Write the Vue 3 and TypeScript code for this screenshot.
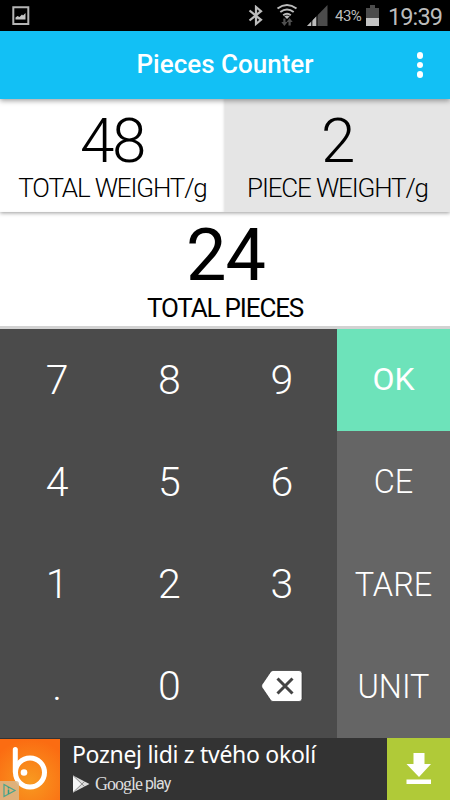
<script setup lang="ts">
import { ref, computed } from 'vue'

const title = 'Pieces Counter'
const totalWeight = ref(48)
const pieceWeight = ref(2)
const pieces = computed(() => Math.floor(totalWeight.value / pieceWeight.value))
const digits = ['7', '8', '9', '4', '5', '6', '1', '2', '3', '.', '0']
const actions = ['OK', 'CE', 'TARE', 'UNIT']
</script>

<template>
  <div class="screen">
    <header class="status">
      <svg class="shot" width="18" height="20" viewBox="0 0 18 20">
        <path d="M1.3 1.3h15v16.8h-15z" fill="none" stroke="#b5b5b5" stroke-width="2" />
        <path d="M3.5 13.5v-2l2-1.5 2 1 2.500-2.500 1 1 2.500-2.500v6.500z" fill="#c5c5c5" />
      </svg>
      <svg class="bt" width="16" height="22" viewBox="0 0 16 22">
        <path d="M1.500 5.500 13 14.800 8 19V2l5 4.200L1.500 15.500" fill="none" stroke="#bcbcbc" stroke-width="2.200" />
      </svg>
      <svg class="wifi" width="22" height="24" viewBox="0 0 22 24">
        <g fill="none" stroke="#bcbcbc" stroke-width="2">
          <path d="M1.500 5.500q9.500-7 19 0M4.300 9q6.700-5 13.400 0M7.200 12.300q3.800-3 7.600 0" />
        </g>
        <path d="M8.300 13.300q2.700-1.800 5.400 0L11 16z" fill="#bcbcbc" />
        <path d="M7.300 15.500h2.200V19h2L8.400 23 5.300 19h2zM12.500 22.500V19h-2l3.100-4 3.100 4h-2v3.500z" fill="#505050" />
      </svg>
      <svg class="signal" width="21" height="21" viewBox="0 0 21 21">
        <path d="M20.500 0v21H0z" fill="#4b4b4b" />
        <path d="M9.500 11.300V21H0z" fill="#bcbcbc" />
        <path d="M4.800 13v8M10 8v13" stroke="#000" stroke-width="1" />
      </svg>
      <span class="percent">43%</span>
      <svg class="battery" width="13" height="21" viewBox="0 0 13 21">
        <path d="M4 0h5v3h4v18H0V3h4z" fill="#4c4c4c" />
        <path d="M0 13h13v8H0z" fill="#c4c4c4" />
      </svg>
      <time class="clock">19:39</time>
    </header>

    <div class="appbar">
      <h1>{{ title }}</h1>
      <button class="more" aria-label="Menu"><i /><i /><i /></button>
    </div>

    <section class="weights">
      <div class="weight active">
        <div class="value">{{ totalWeight }}</div>
        <div class="label">TOTAL WEIGHT/g</div>
      </div>
      <div class="weight">
        <div class="value">{{ pieceWeight }}</div>
        <div class="label">PIECE WEIGHT/g</div>
      </div>
    </section>

    <section class="total">
      <div class="total-value">{{ pieces }}</div>
      <div class="total-label">TOTAL PIECES</div>
    </section>

    <main class="keypad">
      <div class="digits">
        <button v-for="d in digits" :key="d">{{ d }}</button>
        <button aria-label="Backspace">
          <svg class="erase" width="42" height="32" viewBox="0 0 42 32">
            <path d="M12 .5h26q3 0 3 3v25q0 3-3 3H12q-1.500 0-2.500-1.500L1 17.500q-.8-1.500 0-3L9.500 2Q10.500.5 12 .5z" fill="#fff" stroke="#333" stroke-width=".7" />
            <path d="m16.500 8.500 15 15M31.500 8.500l-15 15" stroke="#444" stroke-width="3" />
          </svg>
        </button>
      </div>
      <div class="actions">
        <button v-for="a in actions" :key="a" :class="a.toLowerCase()">{{ a }}</button>
      </div>
    </main>

    <footer class="ad">
      <svg class="brand" width="60" height="62" viewBox="0 0 60 62">
        <defs>
          <radialGradient id="glow" cx=".5" cy=".7" r=".7">
            <stop offset="0" stop-color="#f89a20" />
            <stop offset="1" stop-color="#fb6c12" />
          </radialGradient>
        </defs>
        <path d="M0 1h60v61H0z" fill="url(#glow)" />
        <path d="M15.300 11.500V34" stroke="#fff" stroke-width="5" stroke-linecap="round" />
        <circle cx="30" cy="34.500" r="14.500" fill="none" stroke="#fff" stroke-width="5" />
        <circle cx="24" cy="34.500" r="3.300" fill="#fff" />
        <path d="M0 43h16q3 0 3 3v16H0z" fill="#d9b98c" opacity=".85" />
        <path d="M4 46.500v12l11-6z" fill="none" stroke="#4aa58d" stroke-width="1.200" />
        <path d="M8.500 49v1.500M8.500 51.500V56" stroke="#379c82" stroke-width="1.500" />
      </svg>
      <div class="copy">
        <div class="headline">Poznej lidi z tvého okolí</div>
        <div class="store">
          <svg width="18" height="18" viewBox="0 0 18 18">
            <path d="M1 .5 17.500 9 1 17.500z" fill="#ddd" />
            <path d="M1 .5 9.500 9 1 17.500z" fill="#f7f7f7" />
            <path d="m1 .5 12 11.500M1 17.500 13 6" fill="none" stroke="#777" stroke-width=".8" />
          </svg>
          <span class="google">Google</span><span class="play">play</span>
        </div>
      </div>
      <button class="download" aria-label="Download">
        <svg width="26" height="32" viewBox="0 0 26 32">
          <path d="M7.500 0h11v11H25L13 24 .5 11h7zM.5 26.500H25v4.500H.5z" fill="#fff" />
        </svg>
      </button>
    </footer>
  </div>
</template>

<style>
body { margin: 0; }
</style>

<style scoped>
.screen {
  width: 450px;
  height: 800px;
  overflow: hidden;
  display: flex;
  flex-direction: column;
  font-family: Roboto, "Liberation Sans", sans-serif;
  color: #000;
}
button {
  border: 0;
  padding: 0;
  margin: 0;
  background: none;
  color: inherit;
  font: inherit;
}
svg { display: block; flex: none; }
.status {
  height: 31px;
  flex: none;
  box-sizing: border-box;
  display: flex;
  align-items: flex-start;
  background: #000;
  color: #bcbcbc;
}
.shot { margin: 6px 0 0 12px; }
.bt { margin: 5px 0 0 218px; }
.wifi { margin: 3px 0 0 12px; }
.signal { margin: 5px 0 0 9px; }
.percent { width: 30px; margin: 8px 0 0 7px; font-size: 15px; line-height: 17px; letter-spacing: -.5px; }
.battery { margin: 5px 0 0 1px; }
.clock { margin: 4px 0 0 9px; font-size: 23.500px; line-height: 26px; letter-spacing: -.9px; white-space: nowrap; }
.appbar {
  height: 68px;
  flex: none;
  display: grid;
  grid-template-columns: 60px 1fr 60px;
  align-items: center;
  background: #12c0f5;
  color: #fff;
  position: relative;
  z-index: 3;
  box-shadow: 0 2px 5px rgba(0, 0, 0, .35);
}
h1 {
  grid-column: 2;
  margin: 0;
  padding-bottom: 2px;
  text-align: center;
  font-size: 26px;
  line-height: 30px;
  font-weight: 500;
}
.more { display: flex; flex-direction: column; align-items: center; gap: 3px; }
.more i { width: 6.400px; height: 6.400px; border-radius: 50%; background: #fff; }
.weights {
  height: 113px;
  flex: none;
  display: grid;
  grid-template-columns: 225px 225px;
  position: relative;
  z-index: 2;
  box-shadow: 0 1px 4px rgba(0, 0, 0, .4);
}
.weight { background: #e5e5e5; text-align: center; font-weight: 300; padding-top: 10px; }
.active { background: #fff; box-shadow: inset -2px 0 3px -1px #ddd; }
.value { font-size: 62px; line-height: 64px; letter-spacing: -2.500px; padding-right: 1px; }
.label { font-size: 26px; line-height: 30px; letter-spacing: -1.150px; }
.total {
  height: 117px;
  flex: none;
  box-sizing: border-box;
  padding-top: 8px;
  border-bottom: 3px solid #d2d2d2;
  background: #fff;
  text-align: center;
}
.total-value { font-size: 72px; line-height: 72px; letter-spacing: -1px; padding-left: 1px; }
.total-label { font-size: 26px; line-height: 32px; letter-spacing: -1.150px; }
.keypad {
  height: 409px;
  flex: none;
  display: grid;
  grid-template-columns: 337px 113px;
  background: #4b4b4b;
  color: #fff;
  font-weight: 300;
}
.digits { display: grid; grid-template: repeat(4, 1fr) / repeat(3, 1fr); font-size: 41px; }
.digits button, .actions button { display: flex; align-items: center; justify-content: center; }
.digits button { padding: 0 0 1px 2px; }
.actions { display: grid; grid-template-rows: repeat(4, 1fr); background: #656565; font-size: 32.500px; }
.actions .ok { background: #6de3ba; font-weight: 400; font-size: 32px; padding-bottom: 2px; }
.ad { height: 62px; flex: none; display: flex; background: #333; color: #fff; }
.copy { flex: 1; padding-left: 12px; }
.headline { margin-top: 1px; font: 23px/30px "Noto Sans", sans-serif; letter-spacing: -.300px; white-space: nowrap; }
.store { display: flex; align-items: center; margin-top: 5px; height: 20px; color: #ddd; }
.google { margin-left: 5px; font: 18px/20px "Liberation Serif", serif; letter-spacing: -1px; }
.play { margin-left: 3px; font: 16px/20px Roboto, sans-serif; letter-spacing: -.9px; }
.download { width: 63px; background: #b0ca38; display: flex; align-items: center; justify-content: center; }
</style>
